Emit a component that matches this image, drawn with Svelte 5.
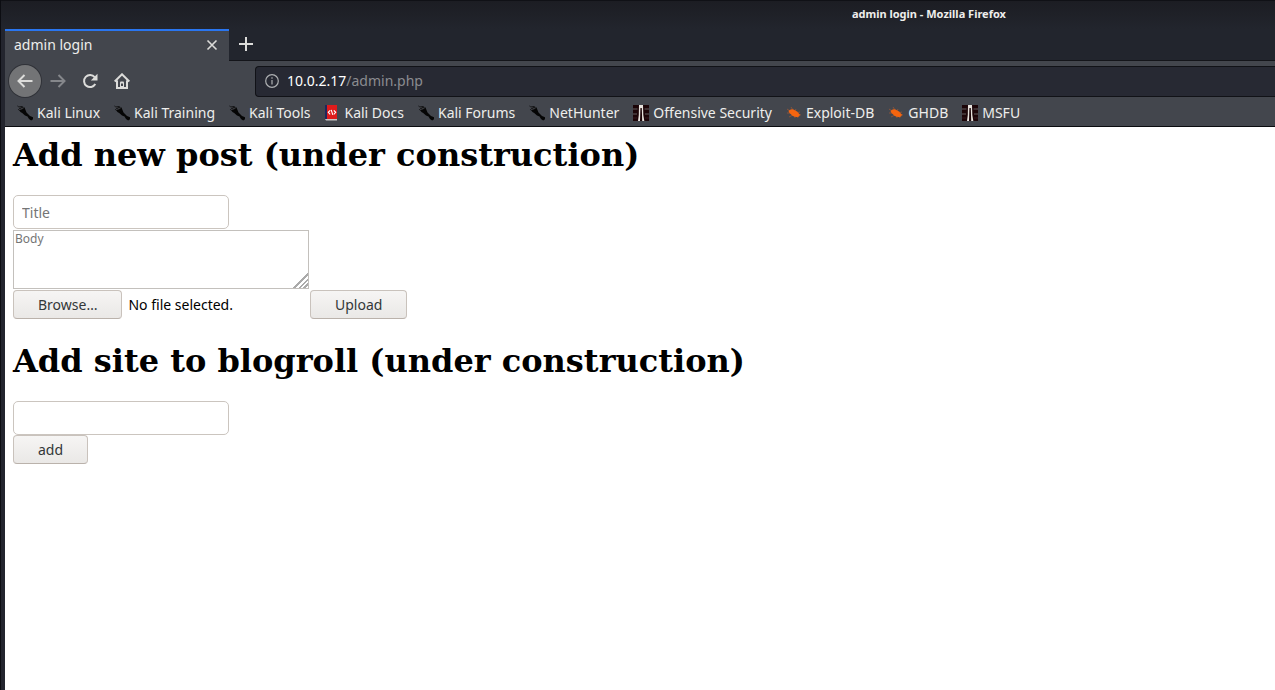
<script>
  const bookmarks = [
    { label: 'Kali Linux', icon: 'kali' },
    { label: 'Kali Training', icon: 'kali' },
    { label: 'Kali Tools', icon: 'kali' },
    { label: 'Kali Docs', icon: 'docs' },
    { label: 'Kali Forums', icon: 'kali' },
    { label: 'NetHunter', icon: 'kali' },
    { label: 'Offensive Security', icon: 'offsec' },
    { label: 'Exploit-DB', icon: 'bug' },
    { label: 'GHDB', icon: 'bug' },
    { label: 'MSFU', icon: 'offsec' }
  ];

  let picker;
  let fileName = $state('No file selected.');

  function onPick(event) {
    fileName = event.currentTarget.files[0]?.name ?? 'No file selected.';
  }
</script>

<div class="window">
  <header class="chrome">
    <div class="titlebar">admin login - Mozilla Firefox</div>

    <div class="tabs">
      <div class="tab">
        <span>admin login</span>
        <button class="icon-button close" aria-label="Close tab">
          <svg width="12" height="12" viewBox="0 0 12 12"><path d="M1.5 1.5l9 9M10.5 1.5l-9 9" /></svg>
        </button>
      </div>
      <button class="icon-button new-tab" aria-label="New tab">
        <svg width="14" height="14" viewBox="0 0 14 14"><path d="M7 0v14M0 7h14" /></svg>
      </button>
    </div>

    <nav class="toolbar">
      <div class="nav-buttons">
        <button class="icon-button back" aria-label="Back">
          <svg width="16" height="16" viewBox="0 0 16 16"><path d="M15.5 8H1.5M7.5 2L1.5 8l6 6" /></svg>
        </button>
        <button class="icon-button forward" aria-label="Forward">
          <svg width="16" height="16" viewBox="0 0 16 16"><path d="M.5 8h14M8.500 2l6 6-6 6" /></svg>
        </button>
        <button class="icon-button" aria-label="Reload">
          <svg width="16" height="16" viewBox="0 0 16 16">
            <path d="M12.700 4.200A6 6 0 1 0 13.300 11" />
            <path class="solid" d="M15.500 .8v6.700H8.800z" />
          </svg>
        </button>
        <button class="icon-button" aria-label="Home">
          <svg width="16" height="16" viewBox="0 0 16 16">
            <path d="M.7 8.500L8 1.300l7.300 7.200M3 7.500V15h10V7.500" />
            <path class="solid" d="M6 15V9.500Q6 8.500 7 8.500h2q1 0 1 1V15z" />
            <path class="door" d="M8 10.500v2.500" />
          </svg>
        </button>
      </div>
      <div class="address">
        <svg width="14" height="14" viewBox="0 0 14 14"><circle cx="7" cy="7" r="6.300" /><path d="M7 6v4.500M7 3.300v1.500" /></svg>
        <a href="#top"><b>10.0.2.17</b>/admin.php</a>
      </div>
    </nav>

    <div class="bookmarks">
      {#each bookmarks as { label, icon }}
        <a href="#top">
          <svg width="16" height="16" viewBox="0 0 16 16">
            {#if icon === 'kali'}
              <path d="M0 .5l2.500 1L5 1.300l2.500 1.200.8 2 1.200 3 2 2 1.500 1.500 3 1.300v2l-1.800 1.200-2.200-1.500-1.500-2.500L8 10.500 5.500 8.300 3.500 7 2.300 5.500.8 4.500l2-.5z" fill="#050505" />
              <path d="M1 1.800l4 1.500 2-.6M2 4.700l3.500-1" fill="none" stroke="#5f6268" stroke-width=".6" />
            {:else if icon === 'docs'}
              <path d="M1 0h2v14H1z" fill="#20265c" />
              <path d="M3 0h10v14H3z" fill="#df1b1b" />
              <path d="M1 14h12v1.500H2z" fill="#c9c5c5" />
              <path d="M6.200 5.300L4.300 7.300l1.900 2M9.800 5.300l1.900 2-1.900 2M7.200 4.800l1.600 5" fill="none" stroke="#fff" stroke-width="1.100" />
            {:else if icon === 'offsec'}
              <path d="M0 0h16v16H0z" fill="#1c0508" />
              <path d="M0 4h4.500M0 9h4M11.500 4H16M12 9h4" stroke="#4b4042" stroke-width="1.400" />
              <path d="M0 13h4M12 13h4" stroke="#35191d" />
              <path d="M6 0h4l.3 10 1 6H9.200L8.800 3H7.400L7 16H5l.8-6z" fill="#e8e3de" />
            {:else}
              <path d="M1 4l3 2M5 2l2 3M10 4L9 6M1 8h4M3 12l4-2M9 13l-.5-3M12 13l-1-2M15 10l-4-1M14 7l-4 1" stroke="#a65a33" stroke-width=".7" />
              <path d="M2.500 6Q4.500 3.300 7.500 4.500l3.500 2 2.500 2.700q.8 1.500-.5 2.300-3 1.500-6.500-.7Q3 8.500 2.500 6z" fill="#f5650f" />
            {/if}
          </svg>
          <span>{label}</span>
        </a>
      {/each}
    </div>
  </header>

  <main id="top">
    <h1>Add new post (under construction)</h1>
    <form onsubmit={(e) => e.preventDefault()}>
      <input class="text" type="text" placeholder="Title" aria-label="Title" />
      <textarea placeholder="Body" aria-label="Body"></textarea>
      <div class="upload">
        <div class="file">
          <button type="button" class="push" onclick={() => picker.click()}>Browse…</button>
          <span>{fileName}</span>
          <input type="file" hidden aria-label="File" bind:this={picker} onchange={onPick} />
        </div>
        <button class="push">Upload</button>
      </div>
    </form>

    <h1>Add site to blogroll (under construction)</h1>
    <form onsubmit={(e) => e.preventDefault()}>
      <input class="text" type="text" aria-label="Site" />
      <button class="push">add</button>
    </form>
  </main>
</div>

<style>
  :global(body) {
    margin: 0;
    background: #fff;
  }

  .window {
    box-sizing: border-box;
    min-height: 100vh;
    border-left: 1px solid #0c0d12;
    box-shadow: inset 4px 0 #23252e;
    padding-left: 4px;
    font: 14px/20px "Noto Sans", sans-serif;
  }

  button,
  input,
  textarea {
    box-sizing: border-box;
    margin: 0;
    font: inherit;
  }

  .chrome {
    background: #43464d;
    border-bottom: 1px solid #0b0c10;
    color: #eeeeec;
  }

  .titlebar {
    box-sizing: border-box;
    height: 29px;
    padding: 4px 0 0 67%;
    margin-left: -4px;
    border-top: 1px solid #101116;
    background: linear-gradient(#1c1d23, #22252d);
    font-size: 11px;
    line-height: 18px;
    font-weight: 700;
    white-space: nowrap;
  }

  .tabs {
    display: flex;
    height: 32px;
    background: #22252d;
    box-shadow: inset 0 -1px #14151a;
  }

  .tab {
    box-sizing: border-box;
    display: flex;
    align-items: center;
    justify-content: space-between;
    width: 224px;
    padding: 0 8px 2px 9px;
    border-top: 2px solid #2a76f0;
    background: #43464d;
  }

  .icon-button {
    display: grid;
    place-items: center;
    width: 32px;
    height: 32px;
    padding: 0;
    border: 0;
    background: none;
    color: #dcdcda;
  }

  .icon-button.close {
    width: 18px;
    height: 18px;
  }

  .icon-button.new-tab {
    height: 30px;
    width: 34px;
  }

  .icon-button svg,
  .address svg {
    fill: none;
    stroke: currentColor;
    stroke-width: 2;
  }

  .icon-button .solid {
    fill: currentColor;
    stroke: none;
  }

  .icon-button .door {
    stroke: #43464d;
  }

  .icon-button.close svg {
    stroke-width: 1.600;
  }

  .icon-button.back {
    margin-right: 1px;
    border-radius: 50%;
    background: #737476;
    box-shadow: 0 0 0 1px #303238;
  }

  .icon-button.forward {
    color: #85878b;
  }

  .toolbar {
    display: flex;
    align-items: center;
    height: 40px;
    padding-left: 4px;
  }

  .nav-buttons {
    display: flex;
    width: 246px;
    flex: none;
  }

  .address {
    box-sizing: border-box;
    display: flex;
    flex: 1;
    align-items: center;
    gap: 8px;
    height: 31px;
    padding-left: 9px;
    border: 1px solid #111217;
    border-right: 0;
    border-radius: 4px 0 0 4px;
    background: #272933;
  }

  .address svg {
    color: #aeb0b2;
    stroke-width: 1.200;
  }

  .address a {
    color: #8b8c90;
    text-decoration: none;
  }

  .address b {
    color: #fff;
    font-weight: 400;
  }

  .bookmarks {
    display: flex;
    gap: 14px;
    height: 25px;
    padding-left: 12px;
    overflow: hidden;
  }

  .bookmarks a {
    display: flex;
    align-items: center;
    gap: 4px;
    padding-bottom: 2px;
    color: inherit;
    text-decoration: none;
    white-space: nowrap;
  }

  main {
    padding: 9px 8px;
    color: #000;
  }

  h1 {
    margin: 0 0 21px;
    font: 700 32px/38px "DejaVu Serif", serif;
  }

  form {
    display: flex;
    flex-direction: column;
    align-items: flex-start;
    margin-bottom: 23px;
  }

  .text {
    width: 216px;
    height: 34px;
    padding: 0 8px;
    border: 1px solid #cbc5bf;
    border-radius: 5px;
    background: #fff;
  }

  .text::placeholder,
  textarea::placeholder {
    color: #757575;
  }

  textarea {
    width: 296px;
    height: 59px;
    margin: 1px 0;
    padding: 0 1px;
    border: 1px solid #c3c0bc;
    border-radius: 0;
    font-size: 12px;
    line-height: 16px;
    resize: both;
  }

  textarea::-webkit-resizer {
    background: linear-gradient(135deg, #fff 50%, #aaa 50% 58%, #fff 58% 67%, #aaa 67% 75%, #fff 75% 83%, #aaa 83% 91%, #fff 91%);
  }

  .upload {
    display: flex;
  }

  .file {
    display: flex;
    align-items: center;
    gap: 6px;
    width: 297px;
  }

  .push {
    height: 29px;
    padding: 0 24px;
    border: 1px solid #c9c2bc;
    border-bottom-color: #bab2ab;
    border-radius: 4px;
    background: linear-gradient(#f6f5f4, #eae8e6);
    color: #333738;
  }
</style>
